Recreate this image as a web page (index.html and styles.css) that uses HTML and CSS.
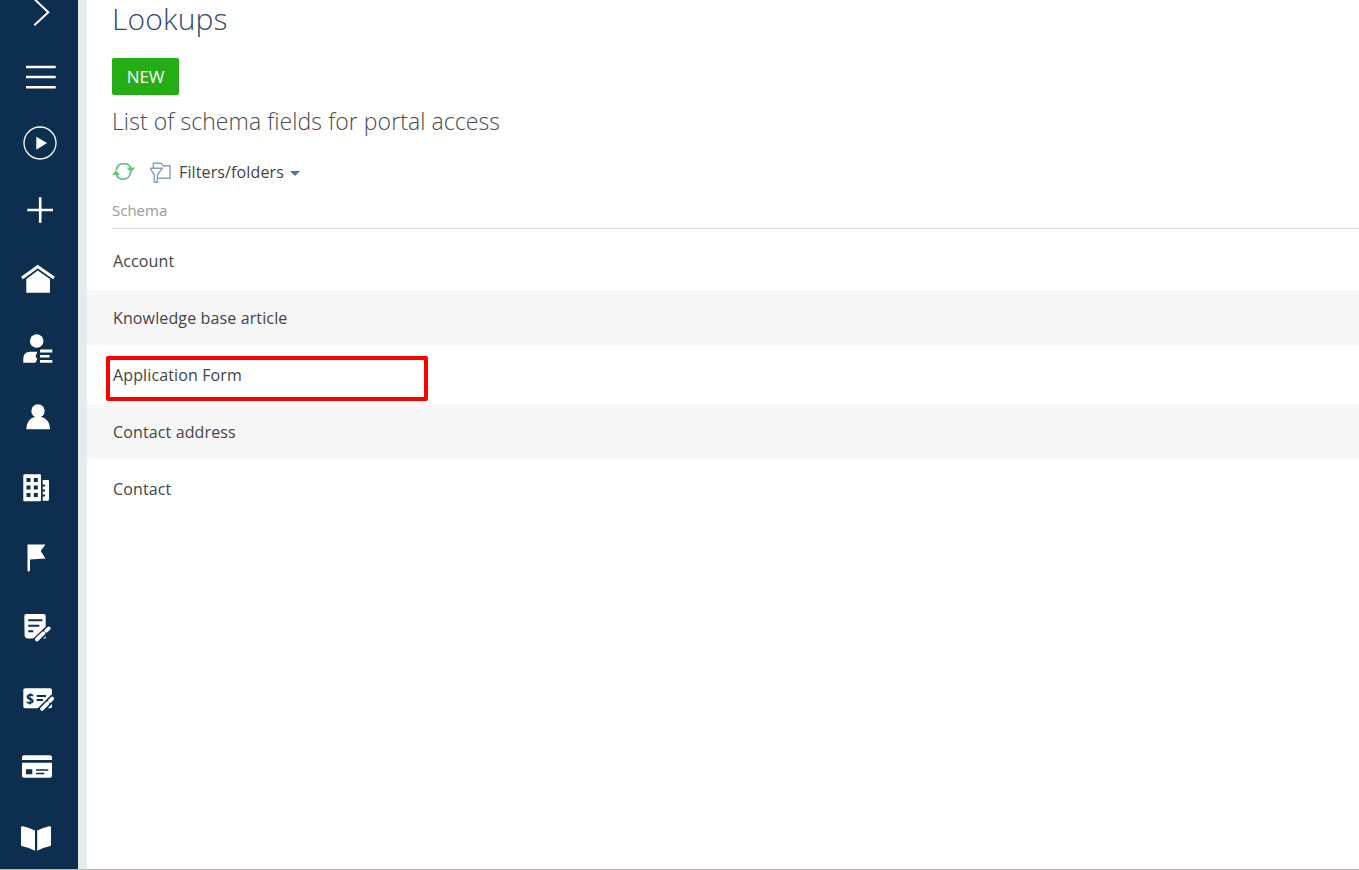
FILE: index.html
```html
<!DOCTYPE html>
<html lang="en">
<head>
<meta charset="utf-8">
<title>Lookups</title>
<link rel="stylesheet" href="styles.css">
</head>
<body>
<div class="app">
  <nav class="sidebar">
    <svg class="nav-icon" width="78" height="45" viewBox="0 0 78 45"><path class="line" d="M34.3-1 48.3 12.3 34.3 25.3"/></svg>
    <svg class="nav-icon" width="78" height="65" viewBox="0 45 78 65"><path class="line thick" d="M26 67H55.7M26 77H55.7M26 87.3H55.7"/></svg>
    <svg class="nav-icon" width="78" height="66" viewBox="0 110 78 66"><circle class="line thin" cx="40" cy="143" r="16"/><path class="fill" d="M36.3 136.7 47 143 36.3 149.7Z"/></svg>
    <svg class="nav-icon" width="78" height="68" viewBox="0 176 78 68"><path class="line thick" d="M27.3 210H53M40.2 197.3V222.7"/></svg>
    <svg class="nav-icon" width="78" height="70" viewBox="0 244 78 70"><path class="line roof" d="M22 278 37.7 266.5 54 278"/><path class="fill" d="M26.3 279 37.7 270.5 50 279V292.7H26.3Z"/></svg>
    <svg class="nav-icon" width="78" height="69" viewBox="0 314 78 69"><circle class="fill" cx="36.7" cy="341" r="6.8"/><path class="fill" d="M23.3 362.7V358Q24 351.7 30 351.7H37.3L35.5 356.5 37.3 359 35.5 362.7Z"/><path class="fill" d="M40 349.5H52.3V352.5H40ZM40 355H49.5V357.6H40ZM40 360H52.3V362.7H40Z"/></svg>
    <svg class="nav-icon" width="78" height="69" viewBox="0 383 78 69"><circle class="fill" cx="38" cy="411" r="6.7"/><path class="fill" d="M26.3 429.3Q27 416.7 38 416.7 49.500 416.700 50 429.3Z"/></svg>
    <svg class="nav-icon" width="78" height="70" viewBox="0 452 78 70"><path class="fill" fill-rule="evenodd" d="M24.300 474.300H40A1 1 0 0 1 41 475.300V500.300A1 1 0 0 1 40 501.300H24.300A1 1 0 0 1 23.300 500.300V475.300A1 1 0 0 1 24.300 474.300ZM26.500 478V482H30.500V478ZM33.800 478V482H37.800V478ZM26.500 485.500V489.500H30.500V485.500ZM33.800 485.500V489.500H37.800V485.500ZM26.500 493V497H30.500V493ZM33.800 493V497H37.800V493Z"/><path class="fill" d="M42.700 480H48A1 1 0 0 1 49 481V499.700A1 1 0 0 1 48 500.700H42.700V496.500H45V494.500H42.700V491.500H45V489.500H42.700V486.500H45V484.500H42.700Z"/></svg>
    <svg class="nav-icon" width="78" height="70" viewBox="0 522 78 70"><path class="fill" d="M27.500 544.500H45.500L40.700 551 45.500 558.500 30 559.500V570.500A1.300 1.300 0 0 1 27.500 570.500Z"/></svg>
    <svg class="nav-icon" width="78" height="71" viewBox="0 592 78 71"><path class="fill" d="M26.300 614H43.700A2 2 0 0 1 45.700 616V638.500H28A3.500 3.500 0 0 1 24.600 635.500L24.300 616A2 2 0 0 1 26.300 614Z"/><path class="line cut" d="M28.300 620.300H42.300M28.300 625.800H39.300M28.300 631.300H33.300"/><path class="line halo" d="M34.500 642 51 626.500"/><path class="line pen" d="M36.800 639.500 43.500 633.200"/><path class="line pen" d="M46.300 630.700 48.800 628.400"/></svg>
    <svg class="nav-icon" width="78" height="69" viewBox="0 663 78 69"><rect class="fill" x="23.300" y="688.300" width="28.700" height="20" rx="2"/><text class="dollar" x="26" y="703.500">$</text><path class="line cut" d="M36.700 696H46M36.700 700H43"/><path class="line halo" d="M40 711 54 697"/><path class="line pen" d="M42 708.800 47.500 703.300"/><path class="line pen" d="M50 700.800 52.200 698.600"/></svg>
    <svg class="nav-icon" width="78" height="70" viewBox="0 732 78 70"><path class="fill" d="M24 755.300H50A2 2 0 0 1 52 757.300V760H22V757.300A2 2 0 0 1 24 755.300ZM22 762.700H52V775.700A2 2 0 0 1 50 777.700H24A2 2 0 0 1 22 775.700Z"/><path class="cut-fill" d="M26 769.300H32.300V774.300H26ZM36 769.300H48.300V770.800H36ZM36 772.800H44.300V774.300H36Z"/></svg>
    <svg class="nav-icon" width="78" height="68" viewBox="0 802 78 68"><path class="fill" d="M21 827.500Q21 826 23 826.300 29 827.500 35 830.500V850.700Q29 847.500 22.500 846.300 21 846 21 845ZM37.200 830.500Q43 827.500 49 826.300 51 826 51 827.500V845Q51 846 49.500 846.300 43 847.500 37.200 850.700Z"/></svg>
  </nav>
  <div class="gutter"></div>
  <main class="content">
    <header class="head">
      <h1 class="title">Lookups</h1>
      <button class="btn-new">NEW</button>
      <h2 class="subtitle">List of schema fields for portal access</h2>
      <div class="toolbar">
        <svg class="refresh" width="24" height="18" viewBox="112 163 24 18"><path class="r-line" d="M116.500 170C117 162 129 161.500 131 168.500M130.500 172C130 181 118 181.500 116 173.500"/><path class="r-fill" d="M126.500 167.500H135.300L131 172.500ZM112.200 175H120L116 170Z"/></svg>
        <svg class="filter" width="21" height="22" viewBox="150 161 21 22"><path class="f-line" d="M153.300 168V163.300H161L163.300 165.700H170V178.300H158M150 168.300H162.300L157.300 175V182.300H154.300V175Z"/></svg>
        <span class="filter-label">Filters/folders</span>
        <span class="caret"></span>
      </div>
      <div class="col-head">Schema</div>
    </header>
    <ul class="rows">
      <li class="row">Account</li>
      <li class="row alt">Knowledge base article</li>
      <li class="row">Application Form<span class="highlight"></span></li>
      <li class="row alt">Contact address</li>
      <li class="row">Contact</li>
    </ul>
  </main>
</div>
</body>
</html>
```

FILE: styles.css
```css
* { box-sizing: border-box; }
html, body { margin: 0; padding: 0; height: 870px; overflow: hidden; background: #fff; }
body { font-family: "Open Sans", sans-serif; color: #444; border-bottom: 1px solid #bdb9b4; }
.app { display: flex; height: 869px; }
.sidebar { width: 78px; flex: none; background: #0d2e4f; display: flex; flex-direction: column; overflow: hidden; }
.nav-icon { display: block; flex: none; }
.line { fill: none; stroke: #fff; stroke-width: 2; }
.thick { stroke-width: 2.6; }
.thin { stroke-width: 1.3; }
.roof { stroke-width: 3; }
.fill { fill: #fff; }
.cut { stroke: #0d2e4f; stroke-width: 2; }
.cut-fill { fill: #0d2e4f; }
.halo { stroke: #0d2e4f; stroke-width: 7; }
.pen { stroke-width: 3.8; stroke-linecap: round; }
.dollar { font-family: "Open Sans", sans-serif; font-weight: 700; font-size: 14px; fill: #0d2e4f; }
.gutter { width: 9px; flex: none; background: #e8ebed; }
.content { flex: 1; min-width: 0; }
.head { padding: 0 0 0 25px; }
.title { margin: -1px 0 0; font-weight: 300; font-size: 30px; line-height: 40px; letter-spacing: .15px; color: #2c4a6e; }
.btn-new { display: block; margin: 19px 0 0; width: 67px; height: 37px; padding: 0; border: 0; border-radius: 2px; background: #25ad16; color: #fff; font: 500 17px "Open Sans", sans-serif; letter-spacing: -.2px; }
.subtitle { margin: 9px 0 0; font-weight: 300; font-size: 23px; line-height: 34px; letter-spacing: .08px; color: #4a4a4a; }
.toolbar { display: flex; align-items: center; height: 24px; margin-top: 22px; }
.refresh { flex: none; }
.filter { flex: none; margin-left: 14px; }
.r-line { fill: none; stroke: #68c682; stroke-width: 2; }
.r-fill { fill: #68c682; }
.f-line { fill: none; stroke: #8a9dbb; stroke-width: 1.4; }
.filter-label { margin-left: 8px; font-size: 16px; letter-spacing: .13px; color: #444; }
.caret { margin: 2px 0 0 6px; width: 0; height: 0; border: 5px solid transparent; border-top-color: #5a7299; border-bottom-width: 0; }
.col-head { margin-top: 10px; height: 35px; padding-top: 6px; line-height: 20px; font-size: 15px; color: #999; border-bottom: 1px solid #ddd; }
.rows { list-style: none; margin: 4px 0 0; padding: 0; display: flex; flex-direction: column; gap: 2px; }
.row { position: relative; height: 55px; padding: 1px 0 0 26px; font-size: 16px; line-height: 55px; letter-spacing: .13px; color: #444; }
.alt { background: #f7f7f7; }
.highlight { position: absolute; left: 19px; top: 9px; width: 322px; height: 45px; border: 4px solid #f00; border-radius: 2px; }
```
